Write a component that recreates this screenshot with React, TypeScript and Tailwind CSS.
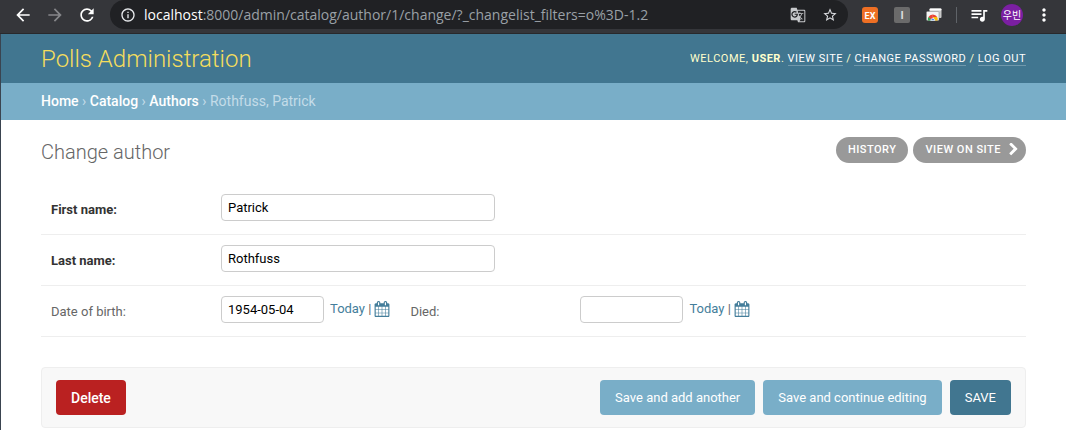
import React from "react";
import {
  MdArrowBack,
  MdArrowForward,
  MdGTranslate,
  MdInfoOutline,
  MdMoreVert,
  MdQueueMusic,
  MdRefresh,
  MdStarBorder,
} from "react-icons/md";

const TOOL_LINK =
  "flex h-[26px] items-center gap-2 rounded-full bg-[#999] pb-px pl-3 text-[11px] font-medium tracking-[0.5px] text-white uppercase";
const INPUT =
  "h-[27px] rounded border border-[#ccc] bg-white px-1.5 pb-px text-[13px] text-black outline-none focus:border-[#999]";
const SUBMIT = "h-[35px] rounded px-[15px] text-[13px] text-white";

function CalendarIcon() {
  return (
    <svg viewBox="0 0 1792 1792" className="size-4" fill="#447e9b" aria-hidden="true">
      <path d="M192 1664h288v-288h-288v288zm352 0h320v-288h-320v288zm-352-352h288v-320h-288v320zm352 0h320v-320h-320v320zm-352-384h288v-288h-288v288zm736 736h320v-288h-320v288zm-384-736h320v-288h-320v288zm768 736h288v-288h-288v288zm-384-352h320v-320h-320v320zm-352-864v-288q0-13-9.5-22.5t-22.5-9.5h-64q-13 0-22.5 9.5t-9.5 22.5v288q0 13 9.5 22.5t22.5 9.5h64q13 0 22.5-9.5t9.5-22.5zm736 864h288v-320h-288v320zm-384-384h320v-288h-320v288zm384 0h288v-288h-288v288zm32-480v-288q0-13-9.5-22.5t-22.5-9.5h-64q-13 0-22.5 9.5t-9.5 22.5v288q0 13 9.5 22.5t22.5 9.5h64q13 0 22.5-9.5t9.5-22.5zm384-64v1280q0 52-38 90t-90 38h-1408q-52 0-90-38t-38-90v-1280q0-52 38-90t90-38h128v-96q0-66 47-113t113-47h64q66 0 113 47t47 113v96h384v-96q0-66 47-113t113-47h64q66 0 113 47t47 113v96h128q52 0 90 38t38 90z" />
    </svg>
  );
}

function ChevronIcon() {
  return (
    <svg viewBox="300 150 1152 1536" className="h-[13px] w-[9px]" fill="#fff" aria-hidden="true">
      <path d="M1363 877l-742 742q-19 19-45 19t-45-19l-166-166q-19-19-19-45t19-45l531-531-531-531q-19-19-19-45t19-45l166-166q19-19 45-19t45 19l742 742q19 19 19 45t-19 45z" />
    </svg>
  );
}

function CastIcon() {
  return (
    <svg viewBox="0 0 16 16" className="size-4" aria-hidden="true">
      <rect x="3.5" y="1.5" width="12" height="9.5" rx="1" fill="#c9c9c9" />
      <rect x="3.5" y="1.5" width="12" height="2" rx="1" fill="#fff" />
      <rect x="0.5" y="4.5" width="12.5" height="9" rx="1" fill="#f4f4f4" stroke="#888" strokeWidth="0.5" />
      <path d="M6.8 12.5V7.5A5 5 0 0 0 2.4 10l2.2 2.5z" fill="#ea4335" />
      <path d="M6.8 7.5A5 5 0 0 1 11.2 10H6.8z" fill="#ea4335" />
      <path d="M2.4 10a5 5 0 0 0-.5 3.5H6L4.8 12z" fill="#34a853" />
      <path d="M11.2 10H7l1.5 3.5h3.2a5 5 0 0 0-.5-3.5z" fill="#fbbc05" />
      <path d="M4.7 13.5a2.1 2.1 0 0 1 4.2 0z" fill="#4285f4" stroke="#fff" strokeWidth="0.6" />
    </svg>
  );
}

function BrowserBar() {
  return (
    <div className="flex h-[34px] items-start border-b border-[#28292c] bg-[#35363a] pr-3 text-white">
      <div className="flex h-[30px] items-center gap-3 px-[13px]">
        <button aria-label="Back"><MdArrowBack className="size-5" /></button>
        <button aria-label="Forward"><MdArrowForward className="size-5 text-[#86878a]" /></button>
        <button aria-label="Reload"><MdRefresh className="size-5" /></button>
      </div>
      <div className="flex h-[29px] min-w-0 flex-1 items-center rounded-full bg-[#202124] px-2.5">
        <MdInfoOutline className="mr-2 size-4 shrink-0 text-[#e8eaed]" />
        <p className="min-w-0 flex-1 truncate font-['Open_Sans',sans-serif] text-[14px] text-[#9aa0a6]">
          <span className="text-white">localhost</span>:8000/admin/catalog/author/1/change/?_changelist_filters=o%3D-1.2
        </p>
        <button aria-label="Translate" className="mr-4"><MdGTranslate className="size-4 text-[#c7c9cc]" /></button>
        <button aria-label="Bookmark"><MdStarBorder className="size-4 text-[#dadce0]" /></button>
      </div>
      <div className="flex h-[30px] items-center pl-3.5">
        <button className="mr-4 size-4 rounded-[3px] bg-[#ee6f24] text-[9px] font-bold">EX</button>
        <button className="mr-4 size-4 rounded-[2px] bg-[#6b6b6b] text-[11px] font-bold text-[#ddd]">I</button>
        <button aria-label="Cast" className="mr-3.5"><CastIcon /></button>
        <span className="mr-3 h-4 w-px bg-[#5f6368]" />
        <button aria-label="Media" className="mr-3"><MdQueueMusic className="size-5" /></button>
        <button className="mr-[11px] size-[22px] rounded-full bg-[#7b1fa2] font-['Noto_Sans_CJK_KR',sans-serif] text-[10px]">우빈</button>
        <button aria-label="Menu"><MdMoreVert className="size-5" /></button>
      </div>
    </div>
  );
}

function NameField({ id, label, value }: { id: string; label: string; value: string }) {
  return (
    <div className="flex items-start border-b border-[#eee] px-2.5 pt-2.5 pb-[13px]">
      <label htmlFor={id} className="w-[170px] pt-[7px] font-bold text-[#333]">{label}</label>
      <input id={id} defaultValue={value} className={`${INPUT} w-[274px]`} />
    </div>
  );
}

function DateField({ id, label, value }: { id: string; label: string; value: string }) {
  return (
    <div className="flex items-start">
      <label htmlFor={id} className="w-[170px] pt-[7px] text-[#666]">{label}</label>
      <input id={id} defaultValue={value} className={`${INPUT} w-[103px]`} />
      <span className="flex items-center gap-[3px] pt-1 pl-1.5 text-[#666]">
        <span>
          <a href="#today" className="text-[#447e9b]">Today</a> |
        </span>
        <a href="#calendar" aria-label={`Choose a date, ${label}`}><CalendarIcon /></a>
      </span>
    </div>
  );
}

export default function App() {
  return (
    <div className="flex min-h-screen flex-col bg-white font-[Roboto,sans-serif] text-[13px] leading-[18px] text-[#333]">
      <BrowserBar />
      <div className="flex-1 border-l border-[#3a4450]">
        <header className="flex h-[49px] items-center justify-between bg-[#417690] px-10 text-[#ffc]">
          <h1 className="text-2xl font-light text-[#f5dd5d]">Polls Administration</h1>
          <div className="text-[11px] tracking-[0.5px] uppercase">
            Welcome, <strong className="font-bold">User</strong>.{" "}
            <a href="#site" className="border-b border-white/25 text-white">View site</a> /{" "}
            <a href="#password" className="border-b border-white/25 text-white">Change password</a> /{" "}
            <a href="#logout" className="border-b border-white/25 text-white">Log out</a>
          </div>
        </header>
        <nav className="flex h-[37px] items-center bg-[#79aec8] px-10 pb-0.5 text-sm text-[#c4dce8]">
          <p>
            <a href="#home" className="font-medium text-white">Home</a> ›{" "}
            <a href="#catalog" className="font-medium text-white">Catalog</a> ›{" "}
            <a href="#authors" className="font-medium text-white">Authors</a> › Rothfuss, Patrick
          </p>
        </nav>
        <main className="px-10 pt-4">
          <div className="mb-5 flex items-start justify-between">
            <h2 className="pt-1 text-xl leading-6 font-light text-[#666]">Change author</h2>
            <div className="mt-px flex gap-[5px]">
              <a href="#history" className={`${TOOL_LINK} pr-3`}>History</a>
              <a href="#view" className={`${TOOL_LINK} pr-2`}>View on site <ChevronIcon /></a>
            </div>
          </div>
          <form onSubmit={(e) => e.preventDefault()}>
            <NameField id="first" label="First name:" value="Patrick" />
            <NameField id="last" label="Last name:" value="Rothfuss" />
            <div className="flex items-start gap-5 border-b border-[#eee] px-2.5 pt-2.5 pb-[13px]">
              <DateField id="birth" label="Date of birth:" value="1954-05-04" />
              <DateField id="died" label="Died:" value="" />
            </div>
            <div className="mt-[30px] flex items-center gap-2 rounded border border-[#eee] bg-[#f8f8f8] px-3.5 py-3">
              <button type="button" className="mr-auto h-[35px] rounded bg-[#ba2121] px-[15px] text-sm font-medium text-white">Delete</button>
              <button className={`${SUBMIT} bg-[#79aec8]`}>Save and add another</button>
              <button className={`${SUBMIT} bg-[#79aec8]`}>Save and continue editing</button>
              <button className={`${SUBMIT} bg-[#417690] uppercase`}>Save</button>
            </div>
          </form>
        </main>
      </div>
    </div>
  );
}
